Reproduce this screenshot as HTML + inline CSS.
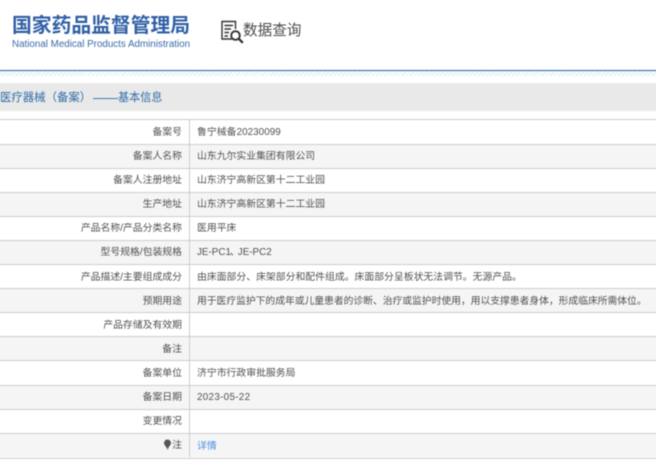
<!DOCTYPE html>
<html lang="zh">
<head>
<meta charset="utf-8">
<style>
html,body{margin:0;padding:0;background:#fff;}
body{width:656px;height:467px;position:relative;overflow:hidden;font-family:"Liberation Sans","Noto Sans CJK SC",sans-serif;}
#w{position:absolute;left:0;top:0;width:656px;height:467px;filter:blur(.4px);}
.abs{position:absolute;white-space:nowrap;}
.row{position:absolute;left:-10px;width:680px;box-sizing:border-box;border-top:1px solid #cdcdcd;}
.row.g{background:#f5f5f5;}
.l{position:absolute;right:488px;top:0;line-height:24px;font-size:9.85px;color:#505050;white-space:nowrap;}
.v{position:absolute;left:207px;top:0;line-height:24px;font-size:9.85px;color:#505050;white-space:nowrap;}
.d .l,.d .v{top:1px;}
.sep{position:absolute;left:189px;top:119px;width:1px;height:338px;background:#cdcdcd;}
</style>
</head>
<body>
<div id="w">
<div class="abs" style="left:12px;top:14px;font-size:19.8px;line-height:24px;font-weight:bold;color:#2f5fa5;">国家药品监督管理局</div>
<div class="abs" style="left:12px;top:38px;font-size:9.8px;line-height:13px;color:#3a6aa6;">National Medical Products Administration</div>
<svg class="abs" style="left:220px;top:20px;" width="24" height="24" viewBox="0 0 24 24" fill="none" stroke="#333" stroke-width="1.4">
<path d="M12 19H2V1.5h13.5V9"/>
<path d="M4.5 5.5H13M4.5 9H11M4.5 12.5H9M4.5 16H8"/>
<circle cx="15.5" cy="15.5" r="4.3" stroke-width="1.9"/>
<path d="M18.7 18.7L22.8 22.8" stroke-width="2.4"/>
</svg>
<div class="abs" style="left:243px;top:20px;font-size:14.6px;line-height:22px;color:#4a4a4a;">数据查询</div>

<div class="abs" style="left:-10px;top:70px;width:680px;height:1px;background:#1f659f;"></div>
<div class="abs" style="left:-10px;top:71px;width:680px;height:5px;background:repeating-linear-gradient(135deg,#dcebf5 0 1px,#fbfdfe 1px 3px);"></div>
<div class="abs" style="left:-10px;top:83px;width:680px;height:28px;background:#e9e9e9;"></div>
<div class="abs" style="left:0;top:84px;font-size:11.4px;line-height:28px;color:#2f6aa8;">医疗器械（备案）</div>
<div class="abs" style="left:93px;top:84px;font-size:12.5px;line-height:28px;color:#2f6aa8;">——</div>
<div class="abs" style="left:118px;top:84px;font-size:11.1px;line-height:28px;color:#2f6aa8;">基本信息</div>

<div class="row d" style="top:119px;height:25px;"><div class="l">备案号</div><div class="v" style="letter-spacing:.05px;">鲁宁械备20230099</div></div>
<div class="row g" style="top:144px;height:24px;"><div class="l">备案人名称</div><div class="v">山东九尔实业集团有限公司</div></div>
<div class="row" style="top:168px;height:24px;"><div class="l">备案人注册地址</div><div class="v">山东济宁高新区第十二工业园</div></div>
<div class="row g" style="top:192px;height:24px;"><div class="l">生产地址</div><div class="v">山东济宁高新区第十二工业园</div></div>
<div class="row" style="top:216px;height:24px;"><div class="l">产品名称/产品分类名称</div><div class="v">医用平床</div></div>
<div class="row g" style="top:240px;height:24px;"><div class="l">型号规格/包装规格</div><div class="v">JE-PC1<span style="margin:0 -2px 0 -1px;">、</span>JE-PC2</div></div>
<div class="row d" style="top:264px;height:24px;"><div class="l">产品描述/主要组成成分</div><div class="v">由床面部分、床架部分和配件组成。床面部分呈板状无法调节。无源产品。</div></div>
<div class="row g d" style="top:288px;height:24px;"><div class="l">预期用途</div><div class="v" style="letter-spacing:-.07px;">用于医疗监护下的成年或儿童患者的诊断、治疗或监护时使用，用以支撑患者身体，形成临床所需体位。</div></div>
<div class="row d" style="top:312px;height:24px;"><div class="l">产品存储及有效期</div></div>
<div class="row g d" style="top:336px;height:24px;"><div class="l">备注</div></div>
<div class="row d" style="top:360px;height:25px;"><div class="l">备案单位</div><div class="v">济宁市行政审批服务局</div></div>
<div class="row g" style="top:385px;height:24px;"><div class="l">备案日期</div><div class="v" style="letter-spacing:.3px;">2023-05-22</div></div>
<div class="row" style="top:409px;height:24px;"><div class="l">变更情况</div></div>
<div class="row g" style="top:433px;height:25px;"><div class="l">注</div><div class="v" style="color:#4a90e2;top:1px;">详情</div></div>
<div class="abs" style="left:-10px;top:458px;width:680px;height:1px;background:#d0d0d0;"></div>
<div class="sep"></div>
<svg class="abs" style="left:163px;top:439px;" width="9" height="11" viewBox="0 0 9 11"><path d="M4.5 0.5A3.6 3.6 0 0 1 8 4C8 6 6 7 5.5 9H3.5C3 7 1 6 1 4A3.6 3.6 0 0 1 4.5 0.5Z" fill="#555"/><rect x="3.5" y="9.3" width="2" height="1" fill="#888"/></svg>
</div>
</body>
</html>
